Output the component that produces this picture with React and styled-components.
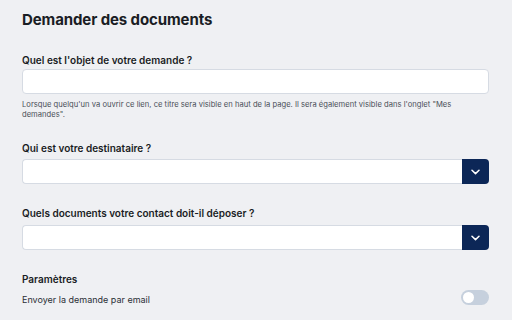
import React from "react";
import styled, { createGlobalStyle } from "styled-components";

const Global = createGlobalStyle`
  html, body { margin: 0; padding: 0; background: #eff0f3; }
  body { font-family: Inter, "Noto Sans", sans-serif; color: #1a1d24; }
  * { box-sizing: border-box; }
`;

const Page = styled.div`
  padding: 10px 23px 0 22px;
  display: flex;
  flex-direction: column;
`;

const Title = styled.h1`
  margin: 0;
  font-size: 15px;
  line-height: 20px;
  font-weight: 700;
  letter-spacing: -0.1px;
`;

const Field = styled.div`
  display: flex;
  flex-direction: column;
  margin-top: ${(p) => p.$mt}px;
`;

const Label = styled.label`
  font-size: 10px;
  line-height: 12px;
  font-weight: 600;
  margin-bottom: ${(p) => p.$mb}px;
`;

const TextInput = styled.div`
  height: 25px;
  background: #fff;
  border: 1px solid #d6dbe3;
  border-radius: 4px;
`;

const Help = styled.p`
  margin: 6px 0 0;
  padding-right: 14px;
  font-size: 7.6px;
  line-height: 10px;
  letter-spacing: 0.02px;
  color: #4a4f58;
`;

const SelectRow = styled.div`
  display: flex;
  height: 25px;
`;

const SelectBox = styled.div`
  flex: 1;
  background: #fff;
  border: 1px solid #d6dbe3;
  border-right: none;
  border-radius: 4px 0 0 4px;
`;

const SelectButton = styled.div`
  width: 27px;
  background: #0c2757;
  border-radius: 0 4px 4px 0;
  display: flex;
  align-items: center;
  justify-content: center;
`;

const SectionTitle = styled.div`
  margin-top: 23px;
  font-size: 10px;
  line-height: 12px;
  font-weight: 600;
`;

const SwitchRow = styled.div`
  margin-top: 5px;
  display: flex;
  align-items: flex-start;
  justify-content: space-between;
`;

const SwitchText = styled.span`
  margin-top: 4px;
  font-size: 9px;
  line-height: 12px;
  color: #2b2f36;
`;

const Toggle = styled.div`
  width: 28px;
  height: 15px;
  border-radius: 8px;
  background: #c6d0dd;
  position: relative;
  &::after {
    content: "";
    position: absolute;
    left: 2px;
    top: 2px;
    width: 11px;
    height: 11px;
    border-radius: 50%;
    background: #fff;
  }
`;

const Chevron = () => (
  <svg width="9" height="6" viewBox="0 0 9 6">
    <path d="M1 1.2 L4.5 4.6 L8 1.2" fill="none" stroke="#fff" strokeWidth="1.5" strokeLinecap="round" strokeLinejoin="round" />
  </svg>
);

export default function App() {
  return (
    <>
      <Global />
      <Page>
        <Title>Demander des documents</Title>
        <Field $mt={24}>
          <Label $mb={3}>Quel est l'objet de votre demande ?</Label>
          <TextInput />
          <Help>
            Lorsque quelqu'un va ouvrir ce lien, ce titre sera visible en haut de la page. Il sera également visible dans l'onglet "Mes demandes".
          </Help>
        </Field>
        <Field $mt={22}>
          <Label $mb={5}>Qui est votre destinataire ?</Label>
          <SelectRow>
            <SelectBox />
            <SelectButton><Chevron /></SelectButton>
          </SelectRow>
        </Field>
        <Field $mt={23}>
          <Label $mb={6}>Quels documents votre contact doit-il déposer ?</Label>
          <SelectRow>
            <SelectBox />
            <SelectButton><Chevron /></SelectButton>
          </SelectRow>
        </Field>
        <SectionTitle>Paramètres</SectionTitle>
        <SwitchRow>
          <SwitchText>Envoyer la demande par email</SwitchText>
          <Toggle />
        </SwitchRow>
      </Page>
    </>
  );
}
